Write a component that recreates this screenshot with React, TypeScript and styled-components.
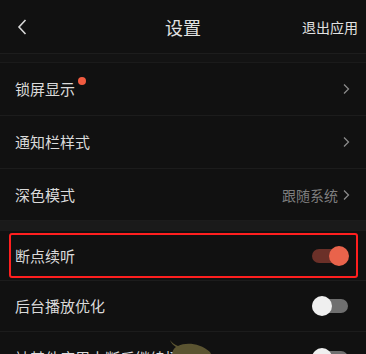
import React from "react";
import styled, { createGlobalStyle } from "styled-components";

const Global = createGlobalStyle`
  html, body { margin: 0; padding: 0; background: #111111; overflow: hidden; }
  body { font-family: "Noto Sans CJK SC", "Noto Sans", sans-serif; }
`;

const Page = styled.div`
  width: 366px;
  height: 354px;
  overflow: hidden;
  background: #111111;
  position: relative;
`;

const Header = styled.div`
  height: 53px;
  display: grid;
  grid-template-columns: 80px 1fr 80px;
  align-items: center;
  border-bottom: 1px solid #1d1d1d;
`;

const Back = styled.div`
  padding-left: 16px;
  display: flex;
  align-items: center;
`;

const Title = styled.div`
  text-align: center;
  color: #e2e2e2;
  font-size: 18px;
`;

const Exit = styled.div`
  text-align: right;
  padding-right: 8px;
  color: #e2e2e2;
  font-size: 14px;
  white-space: nowrap;
`;

const Gap = styled.div<{ $h: number; $bg: string }>`
  height: ${(p) => p.$h}px;
  background: ${(p) => p.$bg};
  border-bottom: 1px solid #1b1b1b;
`;

const Row = styled.div<{ $h?: number }>`
  position: relative;
  height: ${(p) => p.$h ?? 52}px;
  display: flex;
  align-items: center;
  justify-content: space-between;
  padding: 0 16px 0 15px;
  border-bottom: 1px solid #1c1c1c;
`;

const Label = styled.div`
  position: relative;
  color: #dadada;
  font-size: 15px;
  line-height: 20px;
  white-space: nowrap;
`;

const Dot = styled.span`
  position: absolute;
  right: -11px;
  top: -2px;
  width: 8px;
  height: 8px;
  border-radius: 50%;
  background: #f15b40;
`;

const Right = styled.div`
  display: flex;
  align-items: center;
  gap: 4px;
  color: #7e7e7e;
  font-size: 14px;
`;

const Track = styled.div<{ $on: boolean }>`
  position: relative;
  width: 36px;
  height: 14px;
  border-radius: 7px;
  background: ${(p) => (p.$on ? "#6b3028" : "#6f6f6f")};
  margin-right: 2px;
`;

const Knob = styled.div<{ $on: boolean }>`
  position: absolute;
  top: -3px;
  ${(p) => (p.$on ? "right: -1px;" : "left: 0px;")}
  width: 20px;
  height: 20px;
  border-radius: 50%;
  background: ${(p) => (p.$on ? "#e9634b" : "#efefef")};
`;

const Highlight = styled.div`
  position: absolute;
  left: 9px;
  right: 8px;
  top: 2px;
  bottom: 2px;
  border: 2px solid #ff1f1f;
  border-radius: 3px;
  pointer-events: none;
`;

const Blob = styled.svg`
  position: absolute;
  left: 166px;
  top: 340px;
`;

const Chevron = () => (
  <svg width="8" height="12" viewBox="0 0 8 12">
    <path d="M2 1.5 L6.5 6 L2 10.5" fill="none" stroke="#8a8a8a" strokeWidth="1.3" />
  </svg>
);

const Switch = ({ on }: { on: boolean }) => (
  <Track $on={on}>
    <Knob $on={on} />
  </Track>
);

export default function App() {
  return (
    <Page>
      <Global />
      <Header>
        <Back>
          <svg width="12" height="18" viewBox="0 0 12 18">
            <path d="M9.5 2 L3 9 L9.5 16" fill="none" stroke="#d8d8d8" strokeWidth="1.6" />
          </svg>
        </Back>
        <Title>设置</Title>
        <Exit>退出应用</Exit>
      </Header>
      <Gap $h={8} $bg="#131313" />
      <Row>
        <Label>
          锁屏显示
          <Dot />
        </Label>
        <Right>
          <Chevron />
        </Right>
      </Row>
      <Row>
        <Label>通知栏样式</Label>
        <Right>
          <Chevron />
        </Right>
      </Row>
      <Row $h={51}>
        <Label>深色模式</Label>
        <Right>
          跟随系统
          <Chevron />
        </Right>
      </Row>
      <Gap $h={9} $bg="#1a1a1a" />
      <Row $h={49}>
        <Label>断点续听</Label>
        <Switch on={true} />
        <Highlight />
      </Row>
      <Row $h={50}>
        <Label>后台播放优化</Label>
        <Switch on={false} />
      </Row>
      <Row>
        <Label>被其他应用中断后继续播放</Label>
        <Switch on={false} />
      </Row>
      <Blob width="50" height="16" viewBox="0 0 50 16">
        <path d="M4 0 C6 3 9 5 12 6 C20 2 34 3 44 12 L46 16 L6 16 C6 11 8 8 10 7 C7 5 5 3 4 0 Z" fill="#5b5431" />
      </Blob>
    </Page>
  );
}
